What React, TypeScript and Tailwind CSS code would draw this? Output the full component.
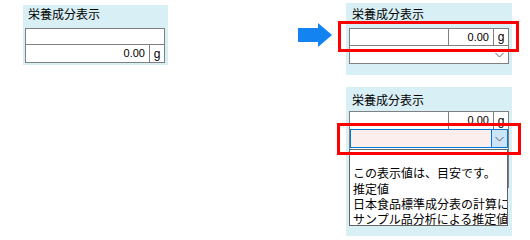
import React from "react";

const jp = "font-['Noto_Sans_CJK_JP','Noto_Sans',sans-serif]";
const num = "font-['Liberation_Sans',Arial,sans-serif]";

function Chevron() {
  return (
    <svg width="9" height="6" viewBox="0 0 9 6" className="block">
      <path d="M0.5 1 L4.5 5 L8.5 1" fill="none" stroke="#5f5f5f" strokeWidth="1" />
    </svg>
  );
}

function Title({ pt }: { pt: string }) {
  return (
    <div className={`${pt} pl-[3px] text-[12px] leading-[12px] text-black ${jp}`}>
      栄養成分表示
    </div>
  );
}

function ValueRow({ h = "h-[17px]" }: { h?: string }) {
  return (
    <div className={`flex ${h}`}>
      <div className="w-[99px] border-r border-[#808080]" />
      <div
        className={`flex w-[45px] items-center justify-end border-r border-[#808080] pr-[4px] text-[11px] ${num}`}
      >
        0.00
      </div>
      <div className={`flex flex-1 items-center justify-center text-[12px] ${num}`}>g</div>
    </div>
  );
}

const options = [
  "",
  "この表示値は、目安です。",
  "推定値",
  "日本食品標準成分表の計算に",
  "サンプル品分析による推定値",
];

export default function App() {
  return (
    <div className="relative flex h-[236px] w-[530px] items-start overflow-hidden bg-white">
      {/* before */}
      <div className="ml-[23px] mt-[5px] w-[145px] bg-[#d9eff6] pb-[2px] pl-[2px] pr-[3px]">
        <div className="h-[23px]">
          <Title pt="pt-[3px]" />
        </div>
        <div className="border border-[#808080] bg-white">
          <div className="h-[16px] border-b border-[#808080]" />
          <div className="flex h-[17px]">
            <div
              className={`flex flex-1 items-center justify-end border-r border-[#808080] pr-[4px] text-[11px] ${num}`}
            >
              0.00
            </div>
            <div className={`flex w-[14px] items-center justify-center text-[12px] ${num}`}>g</div>
          </div>
        </div>
      </div>

      {/* arrow */}
      <svg width="34" height="24" viewBox="0 0 34 24" className="ml-[130px] mt-[23px] block">
        <polygon points="0,5 20,5 20,0 34,12 20,24 20,19 0,19" fill="#1383f2" />
      </svg>

      {/* after */}
      <div className="ml-[14px] flex flex-col">
        <div className="mt-[3px] h-[72px] w-[166px] bg-[#d9eff6] pl-[3px] pr-[3px]">
          <div className="h-[25px]">
            <Title pt="pt-[5px]" />
          </div>
          <div className="border border-[#808080] bg-white">
            <div className="border-b border-[#808080]">
              <ValueRow h="h-[16px]" />
            </div>
            <div className="flex h-[17px] items-center justify-end pr-[4px]">
              <Chevron />
            </div>
          </div>
        </div>

        <div className="mt-[12px] h-[149px] w-[166px] bg-[#d9eff6] pl-[3px] pr-[3px]">
          <div className="h-[24px]">
            <Title pt="pt-[7px]" />
          </div>
          <div className="relative border-x border-t border-[#808080] bg-white">
            <ValueRow />
            <div className="flex h-[19px] border border-[#0078d7] bg-[#fdeeee]">
              <div className="flex-1" />
              <div className="flex w-[16px] items-center justify-center border-l border-[#0078d7] bg-[#cce4f7]">
                <Chevron />
              </div>
            </div>
            <div className="h-[40px]" />
            <div
              className={`absolute left-[-1px] top-[37px] h-[77px] w-[159px] overflow-hidden border border-[#646464] bg-white text-[12px] leading-[15.3px] text-black ${jp}`}
            >
              {options.map((o, i) => (
                <div key={i} className="h-[15.3px] whitespace-nowrap pl-[3px]">
                  {o}
                </div>
              ))}
            </div>
          </div>
        </div>
      </div>

      {/* highlight boxes */}
      <div className="pointer-events-none absolute left-[338px] top-[21px] h-[31px] w-[181px] border-[3px] border-[#ff0000]" />
      <div className="pointer-events-none absolute left-[337px] top-[123px] h-[32px] w-[184px] border-[3px] border-[#ff0000]" />
    </div>
  );
}
